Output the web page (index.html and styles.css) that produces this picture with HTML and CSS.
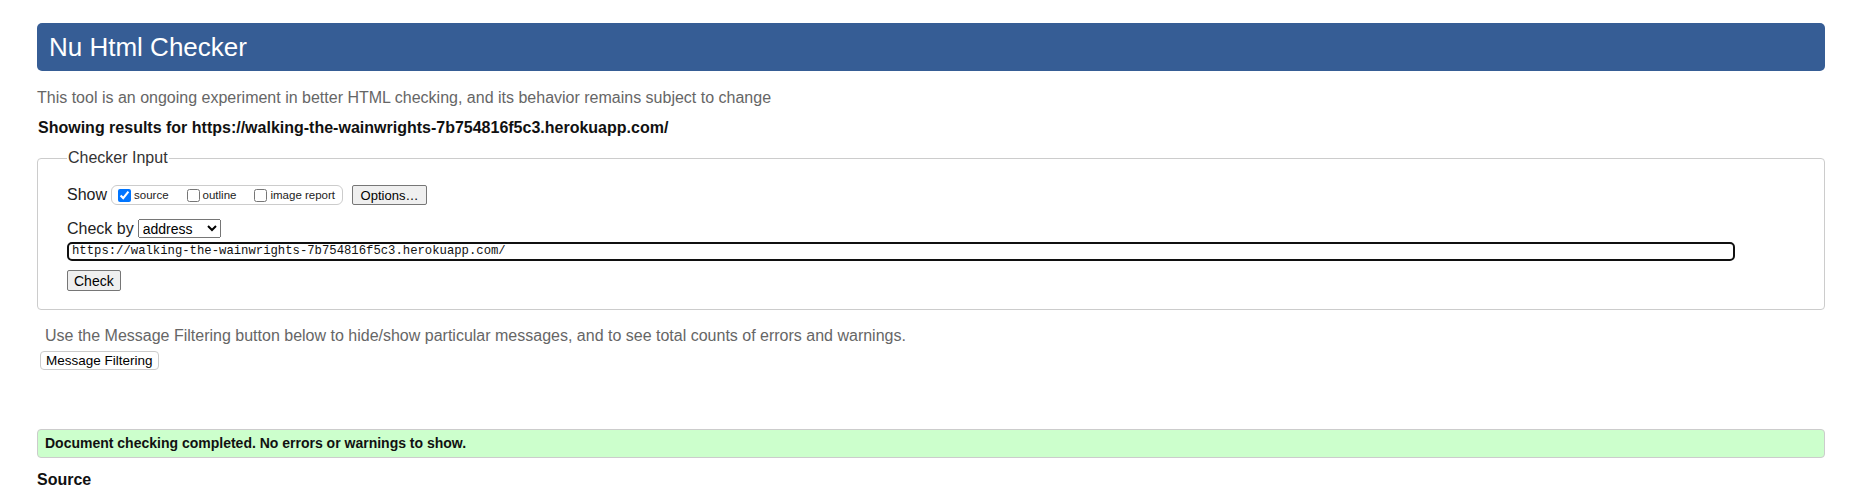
FILE: index.html
```html
<!DOCTYPE html>
<html>
<head>
<meta charset="utf-8">
<title>Nu Html Checker</title>
<link rel="stylesheet" href="styles.css">
</head>
<body>
<div class="page">
  <h1 class="title">Nu Html Checker</h1>
  <p class="intro">This tool is an ongoing experiment in better HTML checking, and its behavior remains subject to change</p>
  <p class="showing">Showing results for https://walking-the-wainwrights-7b754816f5c3.herokuapp.com/</p>
  <fieldset class="checker">
    <legend class="legend">Checker Input</legend>
    <div class="row show-row">
      <span class="lbl">Show</span>
      <span class="group">
        <label class="opt"><input type="checkbox" checked> source</label>
        <label class="opt"><input type="checkbox"> outline</label>
        <label class="opt"><input type="checkbox"> image report</label>
      </span>
      <button class="btn">Options…</button>
    </div>
    <div class="row by-row">
      <span class="lbl">Check by</span>
      <select class="sel"><option>address</option></select>
    </div>
    <div class="url">https://walking-the-wainwrights-7b754816f5c3.herokuapp.com/</div>
    <button class="btn check">Check</button>
  </fieldset>
  <p class="note">Use the Message Filtering button below to hide/show particular messages, and to see total counts of errors and warnings.</p>
  <button class="filter">Message Filtering</button>
  <div class="success">Document checking completed. No errors or warnings to show.</div>
  <h2 class="source">Source</h2>
</div>
</body>
</html>
```

FILE: styles.css
```css
html, body {
  margin: 0;
  padding: 0;
  background: #fff;
}
body {
  font-family: "Liberation Sans", Arial, sans-serif;
  color: #000;
}
.page {
  padding: 23px 41px 0 37px;
}
.title {
  margin: 0;
  height: 48px;
  line-height: 48px;
  padding: 0 12px;
  background: #365d95;
  color: #fff;
  font-size: 26px;
  font-weight: normal;
  border-radius: 5px;
}
.intro {
  margin: 18px 0 0 0;
  font-size: 16px;
  line-height: 18px;
  color: #666;
}
.showing {
  margin: 12px 0 0 1px;
  font-size: 16px;
  line-height: 18px;
  font-weight: bold;
  color: #111;
}
.checker {
  margin: 12px 0 0 0;
  padding: 18px 29px 18px 29px;
  border: 1px solid #ccc;
  border-radius: 4px;
}
.legend {
  padding: 0 1px;
  font-size: 16px;
  line-height: 18px;
  color: #333;
}
.row {
  display: flex;
  align-items: center;
}
.lbl {
  font-size: 16px;
  color: #222;
  margin-right: 4px;
}
.show-row {
  height: 20px;
}
.group {
  display: flex;
  align-items: center;
  height: 18px;
  padding: 0 7px 0 3px;
  border: 1px solid #ccc;
  border-radius: 6px;
  gap: 15px;
}
.opt {
  display: flex;
  align-items: center;
  font-size: 11.5px;
  color: #222;
}
.opt input {
  margin: 0 3px 0 3px;
  width: 13px;
  height: 13px;
}
.btn {
  font-family: "Liberation Sans", Arial, sans-serif;
  font-size: 13px;
  padding: 1px 6px;
  height: 20px;
  width: 75px;
  border: 1px solid #767676;
  border-radius: 2px;
  background: #efefef;
  color: #000;
  margin-left: 9px;
}
.by-row {
  margin-top: 14px;
}
.sel {
  font-family: "Liberation Sans", Arial, sans-serif;
  font-size: 14px;
  width: 83px;
  height: 19px;
  margin-left: 0;
}
.url {
  margin-top: 4px;
  height: 15px;
  width: 1658px;
  padding: 0 3px;
  border: 2px solid #101010;
  border-radius: 5px;
  font-family: "Liberation Mono", "Courier New", monospace;
  font-size: 12.25px;
  line-height: 15px;
  color: #111;
}
.check {
  margin: 9px 0 0 0;
  width: auto;
  height: 21px;
  font-size: 14px;
}
.note {
  margin: 17px 0 0 8px;
  font-size: 16px;
  line-height: 18px;
  color: #666;
}
.filter {
  margin: 6px 0 0 3px;
  font-family: "Liberation Sans", Arial, sans-serif;
  font-size: 13.5px;
  height: 19px;
  padding: 0 5px;
  background: #fff;
  border: 1px solid #ccc;
  border-radius: 4px;
  color: #000;
}
.success {
  margin-top: 59px;
  height: 27px;
  line-height: 27px;
  padding: 0 7px;
  background: #ccffcc;
  border: 1px solid #ccc;
  border-radius: 4px;
  font-size: 14px;
  font-weight: bold;
  color: #111;
}
.source {
  margin: 13px 0 0 0;
  font-size: 16px;
  font-weight: bold;
  color: #111;
}
```
